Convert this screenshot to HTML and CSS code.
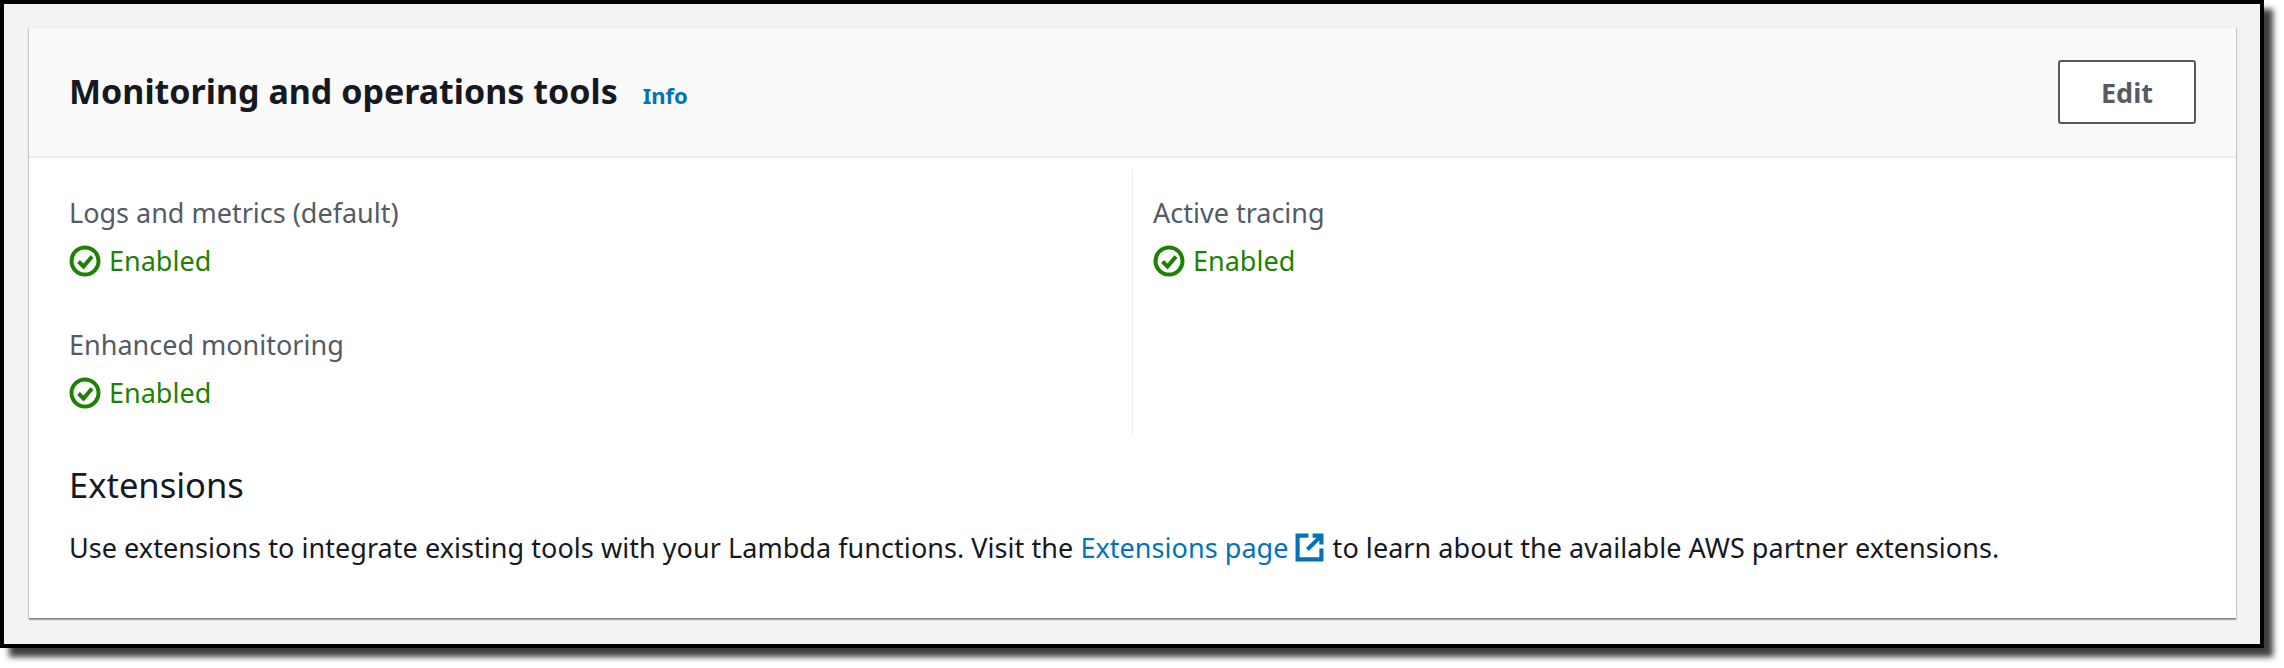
FILE: index.html
```html
<!DOCTYPE html>
<html lang="en">
<head>
  <meta charset="UTF-8" />
  <title>Monitoring and operations tools</title>
  <link rel="stylesheet" href="styles.css">
</head>
<body>
  <div class="frame">
    <section class="card">
      <!-- ===== HEADER ===== -->
      <header class="card-header">
        <div class="title">
          <h2>Monitoring and operations tools</h2>
          <a href="#" class="info">Info</a>
        </div>
        <button class="edit" type="button">Edit</button>
      </header>

      <!-- ===== BODY ===== -->
      <div class="card-body">
        <div class="columns">
          <div class="col">
            <div class="field">
              <div class="label">Logs and metrics (default)</div>
              <div class="status">
                <svg class="status-icon" viewBox="0 0 32 32"><circle cx="16" cy="16" r="13.5"/><path d="M9.5 16.500l5 5 8.500-10"/></svg>
                Enabled
              </div>
            </div>
            <div class="field">
              <div class="label">Enhanced monitoring</div>
              <div class="status">
                <svg class="status-icon" viewBox="0 0 32 32"><circle cx="16" cy="16" r="13.5"/><path d="M9.5 16.500l5 5 8.500-10"/></svg>
                Enabled
              </div>
            </div>
          </div>
          <div class="col col-right">
            <div class="field">
              <div class="label">Active tracing</div>
              <div class="status">
                <svg class="status-icon" viewBox="0 0 32 32"><circle cx="16" cy="16" r="13.5"/><path d="M9.5 16.500l5 5 8.500-10"/></svg>
                Enabled
              </div>
            </div>
          </div>
        </div>

        <h3>Extensions</h3>
        <p>Use extensions to integrate existing tools with your Lambda functions. Visit the <a href="#">Extensions page<svg class="ext-icon" viewBox="0 0 28 28"><path d="M13 2.500H2.500v23h23V15"/><path d="M17 2.500h8.500v8.500M25 3L12 16"/></svg></a> to learn about the available AWS partner extensions.</p>
      </div>
    </section>
  </div>
</body>
</html>
```

FILE: styles.css
```css
:root {
  --ink: #16191f;
  --muted: #545b64;
  --link: #0073bb;
  --ok: #1d8102;
  --line: #eaeded;
}
* { box-sizing: border-box; margin: 0; padding: 0; }

body {
  font-family: "Noto Sans", "Open Sans", Arial, sans-serif;
  background: #ffffff;
  color: var(--ink);
  height: 668px;
  overflow: hidden;
}

.frame {
  width: 2264px;
  height: 648px;
  border: 4px solid #000000;
  background: #f2f3f3;
  box-shadow: 9px 9px 6px rgba(0,0,0,0.75);
  padding: 23px 24px 26px 25px;
}

/* ===== CARD ===== */
.card {
  height: 100%;
  background: #ffffff;
  border-top: 1px solid var(--line);
  box-shadow: 0 2px 1px 0 rgba(0,28,36,0.3), 1px 1px 1px 0 rgba(0,28,36,0.15), -1px 1px 1px 0 rgba(0,28,36,0.15);
}
.card-header {
  height: 130px;
  display: flex;
  align-items: center;
  justify-content: space-between;
  padding: 0 40px 0 40px;
  background: #fafafa;
  border-bottom: 2px solid var(--line);
}
.title { display: flex; align-items: baseline; gap: 25px; padding-bottom: 2px; }
.title h2 {
  font-size: 34px;
  font-weight: 700;
  line-height: 44px;
}
.info {
  font-size: 22px;
  font-weight: 700;
  color: var(--link);
  text-decoration: none;
}
.edit {
  width: 138px;
  height: 64px;
  font-family: inherit;
  font-size: 27px;
  font-weight: 700;
  color: var(--muted);
  background: #ffffff;
  border: 2px solid var(--muted);
  border-radius: 3px;
}

/* ===== BODY ===== */
.card-body { padding: 11px 40px 0; }
.columns { display: flex; height: 266px; }
.col { width: 1063px; padding-top: 25px; }
.col-right {
  flex: 1;
  padding-left: 20px;
  border-left: 1px solid var(--line);
}
.field { height: 132px; }
.label {
  font-size: 27px;
  line-height: 37px;
  color: var(--muted);
}
.status {
  display: flex;
  align-items: center;
  gap: 8px;
  margin-top: 11px;
  font-size: 27px;
  line-height: 37px;
  color: var(--ok);
}
.status-icon {
  width: 32px;
  height: 32px;
  fill: none;
  stroke: var(--ok);
  stroke-width: 4;
}
h3 {
  margin-top: 28px;
  font-size: 34.5px;
  font-weight: 400;
  line-height: 44px;
}
p {
  margin-top: 22px;
  font-size: 27px;
  line-height: 37px;
  letter-spacing: 0.05px;
}
p a { color: var(--link); text-decoration: none; }
.ext-icon {
  width: 29px;
  height: 29px;
  margin: 0 2px 0 6px;
  vertical-align: -4px;
  fill: none;
  stroke: var(--link);
  stroke-width: 4;
}
```
